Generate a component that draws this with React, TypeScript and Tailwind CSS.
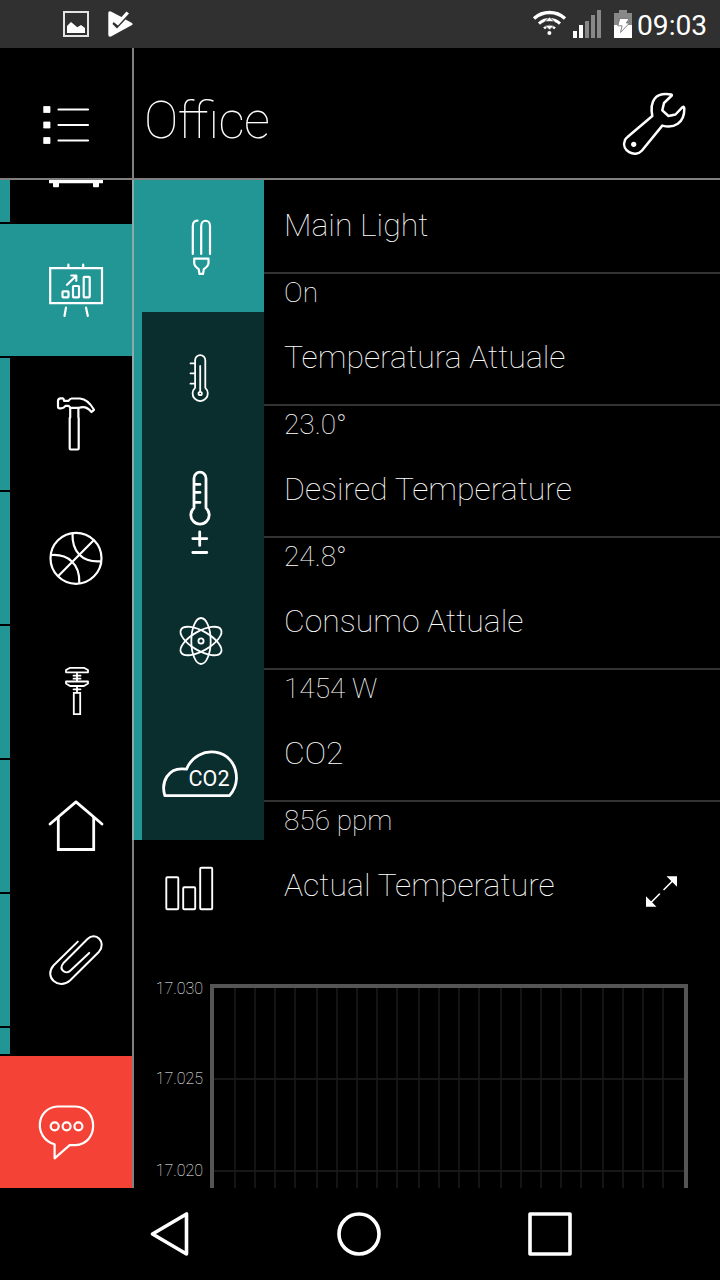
import type { ReactNode } from "react";

type IconProps = { box: string; className: string; width?: number; children: ReactNode };

function Icon({ box, className, width = 2.2, children }: IconProps) {
  return (
    <svg
      viewBox={box}
      className={`block shrink-0 ${className}`}
      fill="none"
      stroke="#fff"
      strokeWidth={width}
      strokeLinecap="round"
      strokeLinejoin="round"
    >
      {children}
    </svg>
  );
}

function StatusBar() {
  return (
    <div className="flex h-12 shrink-0 items-center justify-between bg-[#303030]">
      <Icon box="0 0 160 48" className="h-12 w-40" width={0}>
        <rect x="64" y="12" width="24" height="24" stroke="#e4e4e4" strokeWidth="2" strokeLinejoin="miter" />
        <path d="M67 26l4-4 6.3 5.3 3.7-2.3 4 3v5H67z" fill="#fff" />
        <path d="M108.3 13q0-2.300 2.600-1.500L121.500 17l5-5.500 2.500 2-11 12-4.500-3.500-1 2 4.500 4.500 8.500-9 6.500 3.500q1.500 1.300 0 2L111 36.500q-2.700.7-2.700-1.700z" fill="#fff" />
      </Icon>
      <div className="flex items-center">
        <Icon box="530 0 107 48" className="h-12 w-[107px]" width={3}>
          <path d="M534 18.500a23 23 0 0 1 31 0" strokeLinecap="butt" strokeWidth="3.500" />
          <path d="M539 23.700a15.500 15.500 0 0 1 21 0" strokeLinecap="butt" />
          <path d="M544 28.300a8 8 0 0 1 11 0" strokeLinecap="butt" strokeWidth="2.500" />
          <path d="M545 21.500l4.500-4.500 4.500 4.500zM545 25.500l4.500 4.500 4.500-4.500z" fill="#fff" stroke="#303030" strokeWidth="0.800" />
          <circle cx="549.400" cy="33" r="2" fill="#fff" stroke="none" />
          <path d="M573 31h4v7h-4zM579 25h4v13h-4z" fill="#fff" stroke="none" />
          <path d="M585 21h4v17h-4zM591 15h4v23h-4zM597 10h4v28h-4z" fill="#888" stroke="none" />
          <path d="M619 10h8v3h5v12h-18V13h5z" fill="#888" stroke="none" />
          <path d="M614 25h18v13h-18z" fill="#fff" stroke="none" />
          <path d="M620 18.500h9.300l-3 4.500h3.200l-9 9.500 1.600-6.700h-4z" fill="#fff" stroke="#777" strokeWidth="0.900" />
        </Icon>
        <span className="w-[83px] pt-[4px] text-[28.200px] leading-none text-white">09:03</span>
      </div>
    </div>
  );
}

function Header() {
  return (
    <div className="flex h-[132px] shrink-0 border-b-2 border-[#808080]">
      <div className="w-[134px] border-r-2 border-[#808080]">
        <Icon box="0 48 132 130" className="h-[130px] w-[132px]">
          <path d="M58.500 109.500h29.500M58.500 125h29.500M58.500 140.500h29.500" />
          <path d="M44 106.500h6v6h-6zM44 122h6v6h-6zM44 137.500h6v6h-6z" fill="#fff" strokeWidth="0.800" />
        </Icon>
      </div>
      <h1 className="flex-1 pl-[10px] pt-[41px] text-[51.500px] font-thin leading-[63px] tracking-[-0.6px] [font-feature-settings:'liga'_1]">Office</h1>
      <Icon box="600 48 120 130" className="h-[130px] w-[120px]" width={2.5}>
        <path d="M671.800 95.500L664 103L662.300 110.300L668.500 116L675.500 114.500L682.500 107.200Q684.300 106 684.300 109C684.500 123 674 129 662.300 125.600L642 150.500C635 158.500 620.500 150.500 625 140Q625.700 138.300 627.500 137L652.300 116C649.500 101 655 92 671 94.500Q672 94.700 671.800 95.500Z" />
        <circle cx="633.700" cy="144.300" r="2.600" fill="#fff" stroke="none" />
      </Icon>
    </div>
  );
}

const rooms: { name: string; icon: ReactNode }[] = [
  {
    name: "workshop",
    icon: (
      <Icon box="10 358 122 132" className="h-[132px] w-[122px]">
        <path d="M58 406.500V401q0-2.700 2.700-2.700h1.800q1.200 0 1.600 2.500h4.500q1.400-2.300 3-2.300H80C86.500 399 91 404.500 94 409.800L91.500 412C87.500 407 83.500 406 79 407.800H70.500L68.500 405.800H65.500Q64 408.300 61 408.300H59.700Q58 408.300 58 406.500Z" />
        <path d="M70.200 408v9.500L69.700 418v30.500q0 1 1 1h7q1 0 1-1V418l-.3-.500V408" />
      </Icon>
    ),
  },
  {
    name: "gym",
    icon: (
      <Icon box="10 492 122 132" className="h-[132px] w-[122px]">
        <circle cx="76" cy="558.300" r="25.500" />
        <path d="M58.300 576L93.700 540.300M72.500 533.500C72 552 82 562.500 100.700 561.300M51.700 555C68 554 80 564 79.300 582.700" />
      </Icon>
    ),
  },
  {
    name: "garage",
    icon: (
      <Icon box="10 626 122 132" className="h-[132px] w-[122px]" width={1.8}>
        <path d="M66 672.300v-2.200l3.700-2.200h14.600l3.700 2.200v2.200zM66 681.500h22v2l-4 2.500H70l-4-2.500zM77 673v8M77 686.500v6M73.500 675.700h7M73.500 678.700h7M73.500 689.300h7" />
        <path d="M73.800 692.900h6.400v21.300h-6.400z" strokeLinejoin="miter" />
      </Icon>
    ),
  },
  {
    name: "home",
    icon: (
      <Icon box="10 760 122 132" className="h-[132px] w-[122px]" width={2.8}>
        <path d="M50 824L76 801.900L102 824" />
        <path d="M58.300 817.500V849.500H93.700V817.500" strokeLinejoin="miter" />
      </Icon>
    ),
  },
  {
    name: "study",
    icon: (
      <Icon box="10 894 122 132" className="h-[132px] w-[122px]" width={2}>
        <path d="M77.800 941.600L53.500 965.500C43.500 977 58.500 990.500 70 980.500L99 951.700C107 942 95.500 931 87.500 939L63.500 963C58 970 66 975 70.500 970.500L89.200 952.900" />
      </Icon>
    ),
  },
];

function Sidebar() {
  return (
    <nav className="flex w-[132px] flex-col">
      <div className="flex h-[42px] border-l-[10px] border-[#229595]">
        <svg viewBox="10 180 122 42" className="block h-[42px] w-[122px]" fill="#fff">
          <path d="M49 180h54v3.200h-4v3a1 1 0 0 1-1 1h-4a1 1 0 0 1-1-1v-3H59v3a1 1 0 0 1-1 1h-4a1 1 0 0 1-1-1v-3h-4z" />
        </svg>
      </div>
      <div className="mt-0.5 bg-[#229595]">
        <Icon box="0 224 132 132" className="h-[132px] w-[132px]">
          <path d="M50.200 268.200h51.800v35H50.200z" strokeLinejoin="miter" />
          <path d="M68.400 264.500v3M83.200 264.500v3M66 307.500l-1.500 8.500M86 307.500l1.800 8.500M67 284.800l9.200-9M71.300 275.500h5v5.300" />
          <rect x="62.500" y="291.300" width="6" height="6" rx="0.800" />
          <rect x="73" y="286" width="6" height="11.300" rx="0.800" />
          <rect x="83.700" y="276.800" width="6" height="20.500" rx="0.800" />
        </Icon>
      </div>
      {rooms.map((room) => (
        <div key={room.name} className="mt-0.5 flex border-l-[10px] border-[#229595]">
          {room.icon}
        </div>
      ))}
      <div className="mt-0.5 h-[26px] w-2.5 bg-[#229595]" />
      <div className="mt-0.5 bg-[#f44336]">
        <Icon box="0 1056 132 132" className="h-[132px] w-[132px]">
          <path d="M54.600 1144.300V1158.300L69.700 1145.200H75.500C99 1144 99 1107.500 75.500 1106.500H57.500C36 1107.500 33 1138 54.600 1144.300Z" />
          <circle cx="54.700" cy="1126.300" r="4" />
          <circle cx="66.600" cy="1126.300" r="4" />
          <circle cx="78.400" cy="1126.300" r="4" />
        </Icon>
      </div>
    </nav>
  );
}

const devices: { title: string; value: string; icon: ReactNode }[] = [
  {
    title: "Main Light",
    value: "On",
    icon: (
      <Icon box="142 180 122 132" className="h-[132px] w-[122px]">
        <path d="M197.500 220.700Q192.800 220.500 192.800 226V254M201.200 254V226C201.200 219 210 219 210 226V254M194.200 258.700h14.300v4.300q0 3-4.700 6.200l-.7 4.600h-3.700l-.7-4.600q-4.500-3.200-4.500-6.200z" />
      </Icon>
    ),
  },
  {
    title: "Temperatura Attuale",
    value: "23.0°",
    icon: (
      <Icon box="142 312 122 132" className="h-[132px] w-[122px]" width={1.8}>
        <path d="M195.100 387.800V360.300a5.100 5.100 0 0 1 10.200 0V387.800a7.600 7.600 0 1 1-10.200 0zM200.200 366v25.500M190.500 363.300h4M190.500 373.300h4M190.500 383.700h4" />
        <circle cx="200.200" cy="393.500" r="1.700" />
      </Icon>
    ),
  },
  {
    title: "Desired Temperature",
    value: "24.8°",
    icon: (
      <Icon box="142 444 122 132" className="h-[132px] w-[122px]" width={2.8}>
        <path d="M194 508V478.200a6 6 0 0 1 12 0V508a9.200 9.200 0 1 1-12 0zM194 484.400h6M194 492.400h6M194 502.400h6M192.800 538.600h14M199.700 531.800v13.600M192.800 552.500h14" />
      </Icon>
    ),
  },
  {
    title: "Consumo Attuale",
    value: "1454 W",
    icon: (
      <Icon box="142 576 122 132" className="h-[132px] w-[122px]" width={1.8}>
        <ellipse cx="201" cy="641" rx="9.700" ry="23" />
        <ellipse cx="201" cy="641" rx="9.700" ry="23" transform="rotate(60 201 641)" />
        <ellipse cx="201" cy="641" rx="9.700" ry="23" transform="rotate(-60 201 641)" />
        <circle cx="201" cy="641" r="2.600" />
      </Icon>
    ),
  },
  {
    title: "CO2",
    value: "856 ppm",
    icon: (
      <Icon box="142 708 122 132" className="h-[132px] w-[122px]" width={2.8}>
        <path d="M164.800 795.600C160.500 781 169 768.500 182 768.800L186.500 769.200C197 743 236.500 747 236.500 778.500Q236 788.500 229.500 795.600Z" />
        <text x="188.500" y="786.300" fontSize="21.500" fontWeight="400" textLength="41" fill="#fff" stroke="none">
          CO2
        </text>
      </Icon>
    ),
  },
];

const gridColumns = [234, 254, 274, 294, 316, 336, 356, 376, 396, 418, 438, 458, 478, 500, 520, 540, 560, 580, 602, 622, 642, 662];

function Chart() {
  return (
    <div className="flex h-[204px]">
      <div className="flex w-[76px] flex-col pr-[7px] text-right text-[16px] font-thin leading-[20px] text-white">
        <span className="-mt-[5px]">17.030</span>
        <span className="mt-[70px]">17.025</span>
        <span className="mt-[72px]">17.020</span>
      </div>
      <svg viewBox="210 984 478 204" className="block h-[204px] w-[478px]" shapeRendering="crispEdges">
        {gridColumns.map((x) => (
          <rect key={x} x={x} y="988" width="2" height="200" fill="#141414" />
        ))}
        <rect x="214" y="1078" width="470" height="2" fill="#181818" />
        <rect x="214" y="1170" width="470" height="2" fill="#181818" />
        <path d="M210 984h478v204h-4V988H214v200h-4z" fill="#555" />
      </svg>
    </div>
  );
}

function Content() {
  return (
    <main className="flex flex-1 flex-col">
      {devices.map((device, i) => (
        <section key={device.title} className="flex h-[132px]">
          <div className={`border-l-8 border-[#229595] ${i === 0 ? "bg-[#229595]" : "bg-[#0a2d2d]"}`}>
            {device.icon}
          </div>
          <div className="flex-1 font-thin">
            <h2 className="h-[94px] border-b-2 border-[#333] pl-5 pt-[26px] text-[32px] leading-[38px]">
              {device.title}
            </h2>
            <p className="pl-5 pt-[3px] text-[28px] leading-[32px]">{device.value}</p>
          </div>
        </section>
      ))}
      <section className="flex h-[144px]">
        <Icon box="134 840 130 132" className="h-[132px] w-[130px]" width={1.9}>
          <rect x="166.300" y="877.200" width="12" height="32" rx="1" />
          <rect x="183.200" y="887.200" width="12" height="22" rx="1" />
          <rect x="200.200" y="867.700" width="12" height="41.500" rx="1" />
        </Icon>
        <h2 className="flex-1 pl-5 pt-[26px] text-[32px] font-thin leading-[38px]">Actual Temperature</h2>
        <Icon box="630 840 90 132" className="h-[132px] w-[90px]" width={1.6}>
          <path d="M664 889.500l8-8M659.500 894l-8 8" />
          <path d="M666.500 876.200h10.500v10.500zM646 896.300v10.500h10.500z" fill="#fff" stroke="none" />
        </Icon>
      </section>
      <Chart />
    </main>
  );
}

export default function App() {
  return (
    <div className="flex h-[1280px] w-[720px] flex-col overflow-hidden bg-black font-['Roboto',sans-serif] text-white">
      <StatusBar />
      <Header />
      <div className="flex h-[1008px] shrink-0 overflow-hidden">
        <Sidebar />
        <div className="flex w-0.5 flex-col bg-[#808080]">
          <div className="h-[660px] bg-[#8ea9a9]" />
        </div>
        <Content />
      </div>
      <div className="h-[92px]">
        <Icon box="0 1188 720 92" className="h-[92px] w-[720px]" width={3.6}>
          <path d="M152.500 1234L186.500 1214V1254Z" />
          <circle cx="359" cy="1234" r="20" />
          <rect x="530" y="1214" width="40" height="40" />
        </Icon>
      </div>
    </div>
  );
}
